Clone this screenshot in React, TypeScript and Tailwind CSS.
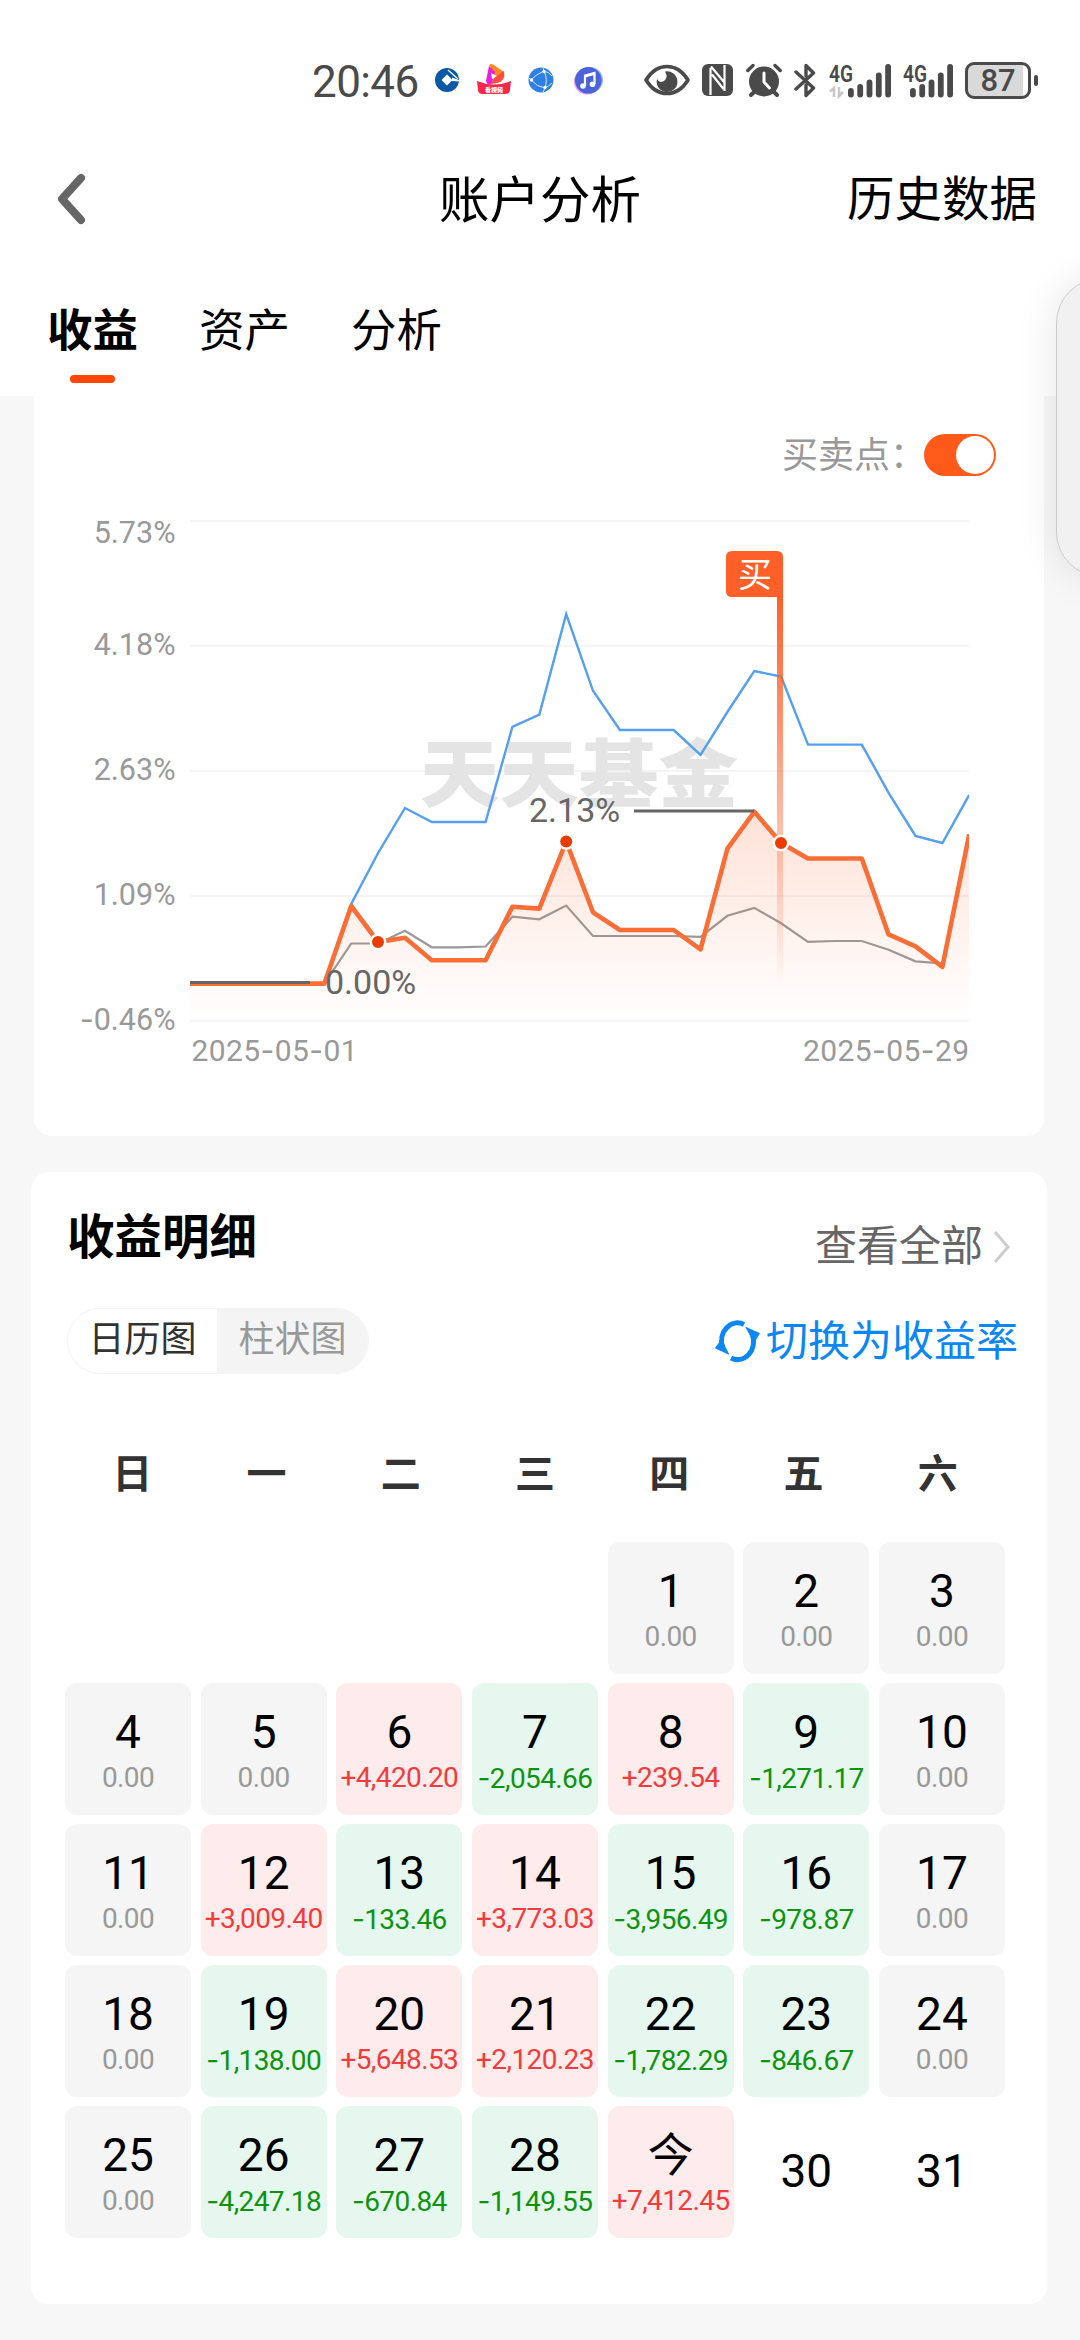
const STEP = 26.87;

const BLUE = [
  983.6, 983.6, 983.6, 983.6, 983.6, 983.6, 904, 853, 808, 822, 822, 822, 726.8, 714.6, 614.1,
  690.8, 730, 730, 730, 755, 712, 671, 676.6, 744.6, 744.6, 744.6, 792.8, 836, 843, 794.8,
];
const ORANGE = [
  983.6, 983.6, 983.6, 983.6, 983.6, 983.6, 906, 942, 937.7, 960.3, 960.3, 960.3, 906.7, 908.6, 841.5,
  912.3, 930, 930, 930, 949.4, 848.6, 811.8, 843, 858.5, 858.5, 858.5, 934.4, 946.3, 966.8, 834.4,
];
const GRAY = [
  983.6, 983.6, 983.6, 983.6, 983.6, 983.6, 943.5, 943.5, 930.8, 947.3, 947.3, 946.5, 916.7, 919.3, 905.5,
  936, 936, 936, 936, 936.8, 915.8, 907.9, 923.3, 941.9, 941, 941, 949.8, 961.3, 963.3,
];

const Y_AXIS = [
  { label: "5.73%", line: 521, text: 543 },
  { label: "4.18%", line: 645.7, text: 655 },
  { label: "2.63%", line: 770.9, text: 780 },
  { label: "1.09%", line: 896, text: 905 },
  { label: "-0.46%", line: 1020.8, text: 1030 },
];

const WEEK = ["日", "一", "二", "三", "四", "五", "六"];

const DAYS: [string, string][] = [
  ["", ""], ["", ""], ["", ""], ["", ""], ["1", "0.00"], ["2", "0.00"], ["3", "0.00"],
  ["4", "0.00"], ["5", "0.00"], ["6", "+4,420.20"], ["7", "-2,054.66"], ["8", "+239.54"], ["9", "-1,271.17"], ["10", "0.00"],
  ["11", "0.00"], ["12", "+3,009.40"], ["13", "-133.46"], ["14", "+3,773.03"], ["15", "-3,956.49"], ["16", "-978.87"], ["17", "0.00"],
  ["18", "0.00"], ["19", "-1,138.00"], ["20", "+5,648.53"], ["21", "+2,120.23"], ["22", "-1,782.29"], ["23", "-846.67"], ["24", "0.00"],
  ["25", "0.00"], ["26", "-4,247.18"], ["27", "-670.84"], ["28", "-1,149.55"], ["今", "+7,412.45"], ["30", ""], ["31", ""],
];

function points(values: number[]) {
  return values.map((y, i) => `${(190 + i * STEP).toFixed(1)},${y}`).join(" ");
}

export default function App() {
  return (
    <main className="relative w-[1080px] h-[2340px] overflow-hidden bg-[#f7f7f7] text-black font-[Roboto,'Noto_Sans_CJK_SC',sans-serif]">
      <div className="bg-white h-[396px]">
        <StatusBar />

        <header className="h-[78px] grid grid-cols-[1fr_auto_1fr] items-center leading-none">
          <svg className="ml-[54px] w-9 h-14" viewBox="0 0 36 56" fill="none" stroke="#666" strokeWidth="8" strokeLinecap="round" strokeLinejoin="round">
            <path d="M27 7 L8 28 L27 49" />
          </svg>
          <h1 className="text-[50.5px] pt-1">账户分析</h1>
          <span className="text-[47.5px] justify-self-end mr-[43px] pt-1">历史数据</span>
        </header>

        <nav className="flex gap-[61px] pl-[47px] pt-[71px] text-[45.5px] leading-[46px]">
          <div className="flex flex-col items-center">
            <span className="font-bold">收益</span>
            <span className="mt-5 w-[45px] h-2 rounded-full bg-[#ff4600]" />
          </div>
          <span>资产</span>
          <span>分析</span>
        </nav>
      </div>

      <section className="ml-[34px] w-[1010px] h-[740px] bg-white rounded-b-[18px] pt-[38px]">
        <div className="flex justify-end items-center pr-12 h-[42px]">
          <span className="text-[36px] leading-none text-[#999] pt-px">买卖点：</span>
          <span className="w-[72px] h-[42px] -ml-0.5 rounded-full bg-[#ff5a1a] flex items-center justify-end pr-0.5">
            <span className="w-[38px] h-[38px] rounded-full bg-white" />
          </span>
        </div>
        <Chart />
      </section>

      <section className="mx-[31px] w-[1016px] h-[1132px] mt-9 bg-white rounded-[18px] pt-9">
        <div className="flex justify-between items-center h-[60px] pl-9 pr-9">
          <h2 className="text-[47.5px] leading-none font-bold pt-0.5">收益明细</h2>
          <div className="flex items-center text-[#666] pt-[18px]">
            <span className="text-[42px] leading-none">查看全部</span>
            <svg className="ml-2.5 w-[18px] h-[34px]" viewBox="0 0 18 34" fill="none" stroke="#ccc" strokeWidth="3">
              <path d="M2 2 L15 17 L2 32" />
            </svg>
          </div>
        </div>

        <div className="flex justify-between items-center mt-10 h-[66px] pl-9 pr-[29px]">
          <div className="flex w-[302px] h-[66px] rounded-full overflow-hidden border border-[#f4f4f4] text-[36px] leading-[62px] text-center">
            <span className="w-[149px] text-[#333]">日历图</span>
            <span className="flex-1 bg-[#f4f4f4] text-[#999]">柱状图</span>
          </div>
          <div className="flex items-center text-[#0a87f5]">
            <svg className="w-[50px] h-[46px] mr-[3px]" viewBox="0 0 50 46" fill="none" stroke="currentColor" strokeWidth="5">
              <path d="M31 6.4 A16 18 0 0 0 9.5 29" />
              <path d="M39.5 17 A16 18 0 0 1 18 40" />
              <path d="M32 8.5 L47 15.3 L41 25 Z M1.9 30.3 L16.6 37 L8.5 21 Z" fill="currentColor" stroke="none" />
            </svg>
            <span className="text-[42px] leading-none pt-px">切换为收益率</span>
          </div>
        </div>

        <div className="grid grid-cols-7 mt-[71px] h-[60px] ml-[34px] w-[940px] items-center text-center font-bold text-[40px] leading-none text-[#333]">
          {WEEK.map((d) => (
            <span key={d}>{d}</span>
          ))}
        </div>

        <div className="grid grid-cols-[repeat(7,126px)] justify-between gap-y-[9px] mt-[37px] ml-[34px] w-[940px]">
          {DAYS.map(([day, amount], i) => (
            <Day key={i} day={day} amount={amount} />
          ))}
        </div>
      </section>

      {/* edge panel peeking in from the right */}
      <div className="absolute left-[1056px] top-[278px] w-[90px] h-[299px] rounded-[45px] border border-[#ccc] bg-[#f1f1f1] shadow-[0_0_40px_rgba(0,0,0,0.1)]" />
    </main>
  );
}

function Day({ day, amount }: { day: string; amount: string }) {
  if (!day) return <div className="h-[132px]" />;
  if (!amount) {
    return <div className="h-[132px] flex items-center justify-center text-[46px] leading-none pb-0.5">{day}</div>;
  }
  const negative = amount.startsWith("-");
  const tone = amount.startsWith("+")
    ? "bg-[#feebeb] text-[#f03c3c]"
    : negative
      ? "bg-[#e5f7ee] text-[#0f930f]"
      : "bg-[#f5f5f5] text-[#999]";
  return (
    <div className={`h-[132px] rounded-xl flex flex-col items-center pt-[25px] whitespace-nowrap ${tone}`}>
      <span className="text-[46px] leading-[48px] h-12 text-black">{day}</span>
      <span className="text-[28px] leading-[32px] mt-1.5 tracking-[-0.6px]">
        {negative && <span className="font-[Inter]">-</span>}
        {negative ? amount.slice(1) : amount}
      </span>
    </div>
  );
}

// Roboto's hyphen is too short next to the digits, so it is set in Inter
function Dashed({ text }: { text: string }) {
  return text.split(/(-)/).map((part, i) =>
    part === "-" ? <tspan key={i} className="font-[Inter]">-</tspan> : part
  );
}

function Chart() {
  return (
    <svg className="block mt-6 w-[1010px] h-[580px]" viewBox="34 500 1010 580" fill="none">
      <defs>
        <linearGradient id="area" x1="0" y1="811" x2="0" y2="1020" gradientUnits="userSpaceOnUse">
          <stop offset="0" stopColor="#fb6b35" stopOpacity="0.2" />
          <stop offset="1" stopColor="#fb6b35" stopOpacity="0" />
        </linearGradient>
        <linearGradient id="pole" x1="0" y1="597" x2="0" y2="985" gradientUnits="userSpaceOnUse">
          <stop offset="0" stopColor="#ff5f28" />
          <stop offset="1" stopColor="#ff5f28" stopOpacity="0" />
        </linearGradient>
        <clipPath id="plot">
          <rect x="190" y="500" width="779" height="530" />
        </clipPath>
      </defs>

      {Y_AXIS.map((a) => (
        <g key={a.label}>
          <path d={`M190 ${a.line} H969`} stroke="#f4f4f4" strokeWidth="2" />
          <text x="175.5" y={a.text} textAnchor="end" fontSize="30.5" fill="#999">
            <Dashed text={a.label} />
          </text>
        </g>
      ))}
      <text x="191.5" y="1061" fontSize="30" fill="#999" textLength="166"><Dashed text="2025-05-01" /></text>
      <text x="803" y="1061" fontSize="30" fill="#999" textLength="166"><Dashed text="2025-05-29" /></text>

      <text x="420" y="801" fontSize="74" fontWeight="900" fill="#e4e4e4" textLength="318" lengthAdjust="spacingAndGlyphs">天天基金</text>

      <g clipPath="url(#plot)">
        <polyline points={points(GRAY)} stroke="#999" strokeWidth="2.2" />
        <polygon points={`190,1020 ${points(ORANGE)} 969,1020`} fill="url(#area)" />
        <polyline points={points(BLUE)} stroke="#559ff0" strokeWidth="2.4" />
        <polyline points={points(ORANGE)} stroke="#f96d37" strokeWidth="4.6" strokeLinejoin="round" />
      </g>

      <path d="M190 982.4 H310" stroke="#666" strokeWidth="3" />
      <path d="M634 811 H754" stroke="#666" strokeWidth="3" />
      <text x="325" y="993.6" fontSize="34" fill="#666">0.00%</text>
      <text x="529" y="822" fontSize="34" fill="#666">2.13%</text>

      <rect x="777" y="590" width="6" height="395" fill="url(#pole)" />
      <path d="M732 551 H777 Q783 551 783 557 V597 H732 Q726 597 726 591 V557 Q726 551 732 551 Z" fill="#ff5f28" />
      <text x="755" y="587" textAnchor="middle" fontSize="34" fill="#fff">买</text>

      {[[378, 942], [566.2, 841.5], [781, 843]].map(([x, y]) => (
        <circle key={x} cx={x} cy={y} r="7.2" fill="#e83c00" stroke="#fff" strokeWidth="2.4" />
      ))}
    </svg>
  );
}

function StatusBar() {
  return (
    <div className="h-40 flex items-center pl-[312px] text-[#4a4a4a] leading-none">
      <span className="w-[107px] text-[44px] tracking-[-0.6px] pt-1">20:46</span>

      <svg className="ml-[16px] w-6 h-6" viewBox="0 0 24 24">
        <circle cx="12" cy="12" r="12" fill="#0a59a5" />
        <path d="M12 6.5 L17.5 12 L12 17.5 L6.5 12 Z" fill="#fff" />
        <path d="M13 2 L23 11" stroke="#fff" strokeWidth="1.2" />
        <path d="M17 9.5 L24 12 V13.6 L17 13 Z" fill="#fff" />
      </svg>

      <svg className="ml-[18px] w-[34px] h-[34px]" viewBox="0 0 34 34">
        <path d="M12 2 Q14 0 17 2 L27 9 Q26 14 20 18 Z" fill="#ff8a1f" />
        <path d="M12 3 L9 18 Q11 24 15 20 L18 9 Z" fill="#e51ee0" />
        <path d="M27 8 Q29 18 20 20 L14 21 L17 15 Z" fill="#fa4b3c" />
        <path d="M14 10 L20 13 L15 16 Z" fill="#fff" />
        <path d="M0 18 Q17 25 34 18 L33 27 Q33 31 28 31 H6 Q1 31 1 27 Z" fill="#f5284b" />
        <text x="17" y="28.5" textAnchor="middle" fontSize="6" fontWeight="900" fill="#fff">看视频</text>
      </svg>

      <svg className="ml-[17px] w-[26px] h-[26px]" viewBox="0 0 26 26" fill="none" stroke="#d8ecff" strokeWidth="1">
        <circle cx="13" cy="13" r="12.5" fill="#2f7fe8" stroke="none" />
        <path d="M16 4 Q7 8 3 13 Q9 20 17 21 Q20 12 16 4 M3 13 L1 11 M16 4 L15 1 M17 21 L15 25 M16 4 Q21 5 24 9 M17 21 Q21 19 24 16" />
        <g fill="#fff" stroke="none">
          <circle cx="16" cy="4.5" r="1.7" />
          <circle cx="3.5" cy="13" r="1.7" />
          <circle cx="17" cy="20.5" r="1.7" />
        </g>
      </svg>

      <svg className="ml-5 w-[29px] h-[29px]" viewBox="0 0 29 29">
        <circle cx="16" cy="14" r="13" fill="#9fb4ff" />
        <circle cx="13" cy="15.5" r="13" fill="#e79bea" />
        <circle cx="14.3" cy="14.3" r="13.3" fill="#4a63d8" />
        <path d="M11 20 V9.5 L20.5 7 V18" stroke="#fff" strokeWidth="2.2" fill="none" />
        <path d="M11 9 L20.5 6.5 V9 L11 11.5 Z" fill="#fff" />
        <circle cx="9" cy="20" r="2.8" fill="#fff" />
        <circle cx="18.5" cy="18.3" r="2.8" fill="#fff" />
      </svg>

      <svg className="ml-[41px] w-[46px] h-8" viewBox="0 0 46 32">
        <path d="M2 16 C13 -2 33 -2 44 16 C33 34 13 34 2 16 Z" fill="none" stroke="currentColor" strokeWidth="3.6" strokeLinejoin="round" />
        <path d="M21 7.5 A10.4 10.4 0 1 1 13 15 Q15 19 19 17.5 Q25 14 21 7.5 Z" fill="currentColor" />
      </svg>

      <svg className="ml-3 w-[31px] h-8" viewBox="0 0 31 32">
        <rect width="31" height="32" rx="6" fill="currentColor" />
        <path d="M8.5 31 V4 M22.5 1 V27 M10 10.5 L21.5 25 M9 2.5 L22 18" stroke="#fff" strokeWidth="2.2" />
      </svg>

      <svg className="ml-[13px] w-9 h-[34px]" viewBox="0 0 36 34" stroke="currentColor" strokeLinecap="round">
        <circle cx="18" cy="18.5" r="15" fill="currentColor" stroke="none" />
        <path d="M1.8 7.5 L7 2.5 M34.2 7.5 L29 2.5" strokeWidth="3.4" />
        <path d="M8 29 L5 32 M28 29 L31 32" strokeWidth="4" />
        <path d="M18 10 V19 L23.5 25" fill="none" stroke="#fff" strokeWidth="3" />
      </svg>

      <svg className="ml-3 w-[22px] h-[35px]" viewBox="0 0 22 35" fill="none" stroke="currentColor" strokeWidth="3.4" strokeLinecap="round" strokeLinejoin="round">
        <path d="M2 9 L19.5 25 L12 32.5 V22 M2 26 L19.5 10 L12 2.5 V13" />
      </svg>

      <Signal className="ml-[13px]" arrows />
      <Signal className="ml-[11px]" near />

      <div className="ml-[11px] w-[66px] h-[37px] rounded-[9px] border-[3px] border-[#4a4a4a] bg-[linear-gradient(90deg,#d9d9d9_0_55px,#fff_55px)] text-center">
        <span className="text-[31px] leading-[32px] font-medium">87</span>
      </div>
      <span className="ml-[3px] w-1 h-[11px] rounded-sm bg-[#4a4a4a]" />
    </div>
  );
}

function Signal({ className, arrows, near }: { className: string; arrows?: boolean; near?: boolean }) {
  const x = near ? 7 : 19;
  const tops = [25, 21, 16.5, 9.5, 1];
  return (
    <svg className={`${near ? "w-[51px]" : "w-[63px]"} h-[47px] ${className}`} viewBox={near ? "0 -6 51 47" : "0 -6 63 47"} fill="currentColor">
      <text x="0" y="18.5" fontSize="23" fontWeight="600" textLength="24" lengthAdjust="spacingAndGlyphs">4G</text>
      {arrows && (
        <path d="M5 34 V25 L1 28.5 M10 24 V33 L14 29" fill="none" stroke="#c8c8c8" strokeWidth="2.6" />
      )}
      {tops.map((t, i) => (
        <rect key={t} x={x + i * 9.3} y={t} width="5.8" height={34.5 - t} rx="2.9" />
      ))}
    </svg>
  );
}
